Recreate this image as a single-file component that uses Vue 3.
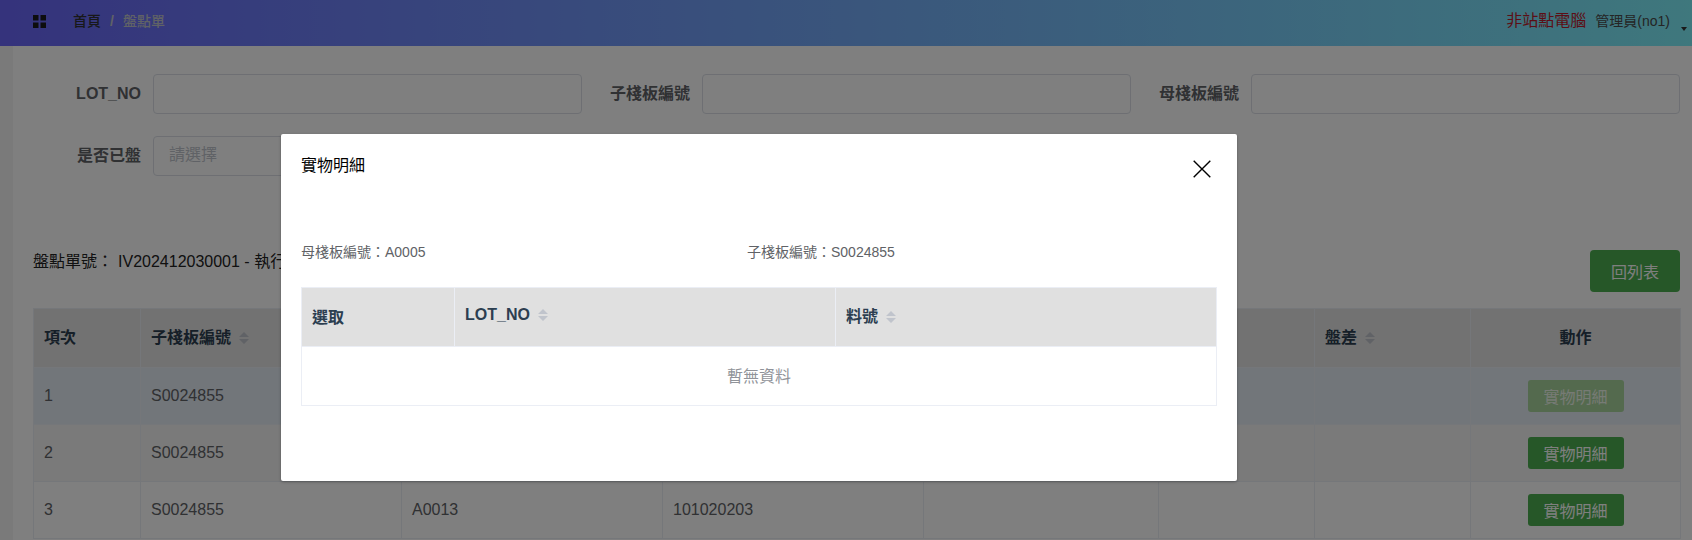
<script setup>
const columns = [107, 261, 261, 261, 235, 156, 156, 210]
const rows = [
  { no: 1, child: 'S0024855', mother: 'A0005', part: '', hover: true },
  { no: 2, child: 'S0024855', mother: '', part: '', hover: false },
  { no: 3, child: 'S0024855', mother: 'A0013', part: '101020203', hover: false },
]
</script>

<template>
  <div class="page">
    <header class="topbar">
      <div class="crumbs">
        <svg class="grid-icon" width="13" height="13" viewBox="0 0 13 13" aria-hidden="true">
          <rect x="0" y="0" width="5.5" height="5.5" />
          <rect x="7.5" y="0" width="5.5" height="5.5" />
          <rect x="0" y="7.5" width="5.5" height="5.5" />
          <rect x="7.5" y="7.5" width="5.5" height="5.5" />
        </svg>
        <span class="crumb-home">首頁</span>
        <span class="crumb-sep">/</span>
        <span class="crumb-now">盤點單</span>
      </div>
      <div class="user">
        <span class="station">非站點電腦</span>
        <span class="admin">管理員(no1)</span>
        <i class="caret"></i>
      </div>
    </header>

    <div class="body">
      <aside class="rail"></aside>
      <main class="main">
        <form class="filters">
          <label class="field"><span class="field-label">LOT_NO</span><span class="input"></span></label>
          <label class="field"><span class="field-label">子棧板編號</span><span class="input"></span></label>
          <label class="field"><span class="field-label">母棧板編號</span><span class="input"></span></label>
          <label class="field"><span class="field-label">是否已盤</span><span class="input placeholder">請選擇</span></label>
        </form>

        <div class="toolbar">
          <div class="doc">盤點單號&#xFF1A;<span class="doc-no">IV202412030001 - 執行中</span></div>
          <button type="button" class="btn btn-back">回列表</button>
        </div>

        <table class="grid">
          <colgroup>
            <col v-for="(w, i) in columns" :key="i" :style="{ width: w + 'px' }" />
          </colgroup>
          <thead>
            <tr>
              <th>項次</th>
              <th>子棧板編號<svg class="sort" width="10" height="12" viewBox="0 0 10 12"><path d="M5 0l5 5H0zM5 12L0 7h10z" /></svg></th>
              <th></th>
              <th></th>
              <th></th>
              <th></th>
              <th>盤差<svg class="sort" width="10" height="12" viewBox="0 0 10 12"><path d="M5 0l5 5H0zM5 12L0 7h10z" /></svg></th>
              <th class="center">動作</th>
            </tr>
          </thead>
          <tbody>
            <tr v-for="(r, i) in rows" :key="r.no" :class="{ hover: r.hover, stripe: i === 1 }">
              <td>{{ r.no }}</td>
              <td>{{ r.child }}</td>
              <td>{{ r.mother }}</td>
              <td>{{ r.part }}</td>
              <td></td>
              <td></td>
              <td></td>
              <td class="center">
                <button type="button" class="btn btn-row" :class="{ faded: r.hover }">實物明細</button>
              </td>
            </tr>
          </tbody>
        </table>
      </main>
    </div>

    <div class="overlay">
      <section class="modal">
        <div class="modal-head">
          <h2 class="modal-title">實物明細</h2>
          <svg class="close" width="18" height="18" viewBox="0 0 18 18" aria-label="關閉">
            <path d="M0.7 0.7L17.3 17.3M17.3 0.7L0.7 17.3" />
          </svg>
        </div>
        <div class="info">
          <span>母棧板編號&#xFF1A;A0005</span>
          <span>子棧板編號&#xFF1A;S0024855</span>
        </div>
        <table class="detail">
          <colgroup>
            <col class="c1" />
            <col class="c2" />
            <col class="c3" />
          </colgroup>
          <thead>
            <tr>
              <th class="th-select">選取</th>
              <th>LOT_NO<svg class="sort" width="10" height="12" viewBox="0 0 10 12"><path d="M5 0l5 5H0zM5 12L0 7h10z" /></svg></th>
              <th>料號<svg class="sort" width="10" height="12" viewBox="0 0 10 12"><path d="M5 0l5 5H0zM5 12L0 7h10z" /></svg></th>
            </tr>
          </thead>
          <tbody>
            <tr><td colspan="3" class="empty">暫無資料</td></tr>
          </tbody>
        </table>
      </section>
    </div>
  </div>
</template>

<style>
html, body { margin: 0; background: #fff; overflow: hidden; }
</style>

<style scoped>
.page {
  position: relative;
  width: 1692px;
  height: 540px;
  overflow: hidden;
  font-family: "Liberation Sans", "Noto Sans CJK TC", sans-serif;
  font-size: 16px;
  color: #606266;
}
.topbar {
  height: 46px;
  display: flex;
  justify-content: space-between;
  background: linear-gradient(90deg, #6a66f8 0%, #7ef0fa 100%);
}
.crumbs {
  display: flex;
  align-items: flex-start;
  padding: 13px 0 0 33px;
  font-size: 14px;
  line-height: 16px;
}
.grid-icon { fill: #1a1a1a; margin: 2px 27px 0 0; }
.crumb-home { font-weight: 500; color: #303133; }
.crumb-sep { margin: 0 9px; font-weight: 700; color: #c0c4cc; }
.crumb-now { font-weight: 500; color: #c0c4cc; }
.user {
  display: flex;
  align-items: flex-start;
  padding: 12px 5px 0 0;
  line-height: 18px;
}
.station { color: #b81c2c; margin-right: 9px; }
.admin { font-size: 14px; color: #4a4a4a; }
.caret {
  width: 0;
  height: 0;
  margin: 15px 0 0 11px;
  border-left: 3px solid transparent;
  border-right: 3px solid transparent;
  border-top: 4px solid #333;
}
.body { display: flex; }
.rail { width: 13px; flex: none; height: 494px; background: #f4f4f4; }
.main { flex: none; width: 1647px; padding-left: 20px; }
.filters {
  display: grid;
  grid-template-columns: repeat(3, 549px);
  row-gap: 22px;
  padding-top: 28px;
}
.field { display: flex; }
.field-label {
  flex: none;
  width: 108px;
  padding-right: 12px;
  text-align: right;
  line-height: 40px;
  font-weight: 700;
  color: #606266;
}
.input {
  box-sizing: border-box;
  flex: none;
  width: 429px;
  height: 40px;
  padding: 0 15px;
  line-height: 38px;
  border: 1px solid #dcdfe6;
  border-radius: 4px;
  background: #fff;
}
.placeholder { color: #c0c4cc; line-height: 36px; }
.toolbar {
  display: flex;
  justify-content: space-between;
  align-items: flex-start;
  margin-top: 74px;
}
.doc { line-height: 24px; color: #222; }
.doc-no { margin-left: 5px; }
.btn {
  border: 0;
  font: inherit;
  color: #fff;
  background: #4caf50;
  padding: 0;
}
.btn-back { width: 90px; height: 42px; border-radius: 4px; color: #fff; }
.grid {
  width: 1647px;
  margin-top: 16px;
  border-collapse: collapse;
  table-layout: fixed;
}
.grid th, .grid td {
  box-sizing: border-box;
  padding: 0 10px;
  border: 1px solid #ebeef5;
  text-align: left;
}
.grid th { padding-bottom: 4px; }
.grid thead tr { height: 59px; background: #e4e4e4; }
.grid th { font-weight: 700; color: #2c3e50; }
.grid tbody tr { height: 57px; }
.grid .center { text-align: center; }
.hover { background: #e4ecf5; }
.stripe { background: #f5f5f5; }
.btn-row { width: 96px; height: 32px; border-radius: 3px; vertical-align: middle; }
.btn-row.faded { background: #a8d49c; color: #eef6ea; }
.sort { fill: #c0c4cc; margin-left: 8px; vertical-align: -1px; }
.overlay {
  position: absolute;
  inset: 0;
  background: rgba(0, 0, 0, 0.5);
}
.modal {
  position: absolute;
  left: 281px;
  top: 134px;
  box-sizing: border-box;
  width: 956px;
  height: 347px;
  padding: 0 20px;
  border-radius: 2px;
  background: #fff;
  box-shadow: 0 1px 3px rgba(0, 0, 0, 0.3);
}
.modal-head {
  display: flex;
  justify-content: space-between;
  align-items: flex-start;
  padding-top: 20px;
  margin-right: 6px;
}
.modal-title {
  margin: 0;
  font-size: 16px;
  font-weight: 400;
  line-height: 24px;
  color: #000;
}
.close { margin-top: 6px; fill: none; stroke: #000; stroke-width: 1.4; }
.info {
  display: grid;
  grid-template-columns: 446px 1fr;
  margin-top: 64px;
  font-size: 14px;
  line-height: 20px;
  color: #606266;
}
.detail {
  width: 915px;
  margin-top: 25px;
  border-collapse: collapse;
  table-layout: fixed;
}
.c1 { width: 153px; }
.c2 { width: 381px; }
.c3 { width: 381px; }
.detail th {
  box-sizing: border-box;
  height: 59px;
  padding: 0 10px 5px;
  border: 1px solid #ebeef5;
  background: #e0e0e0;
  text-align: left;
  font-weight: 700;
  color: #2c3e50;
}
.detail .th-select { padding-bottom: 3px; }
.empty {
  box-sizing: border-box;
  height: 59px;
  padding: 0 0 3px;
  border: 1px solid #ebeef5;
  text-align: center;
  color: #909399;
}
</style>
